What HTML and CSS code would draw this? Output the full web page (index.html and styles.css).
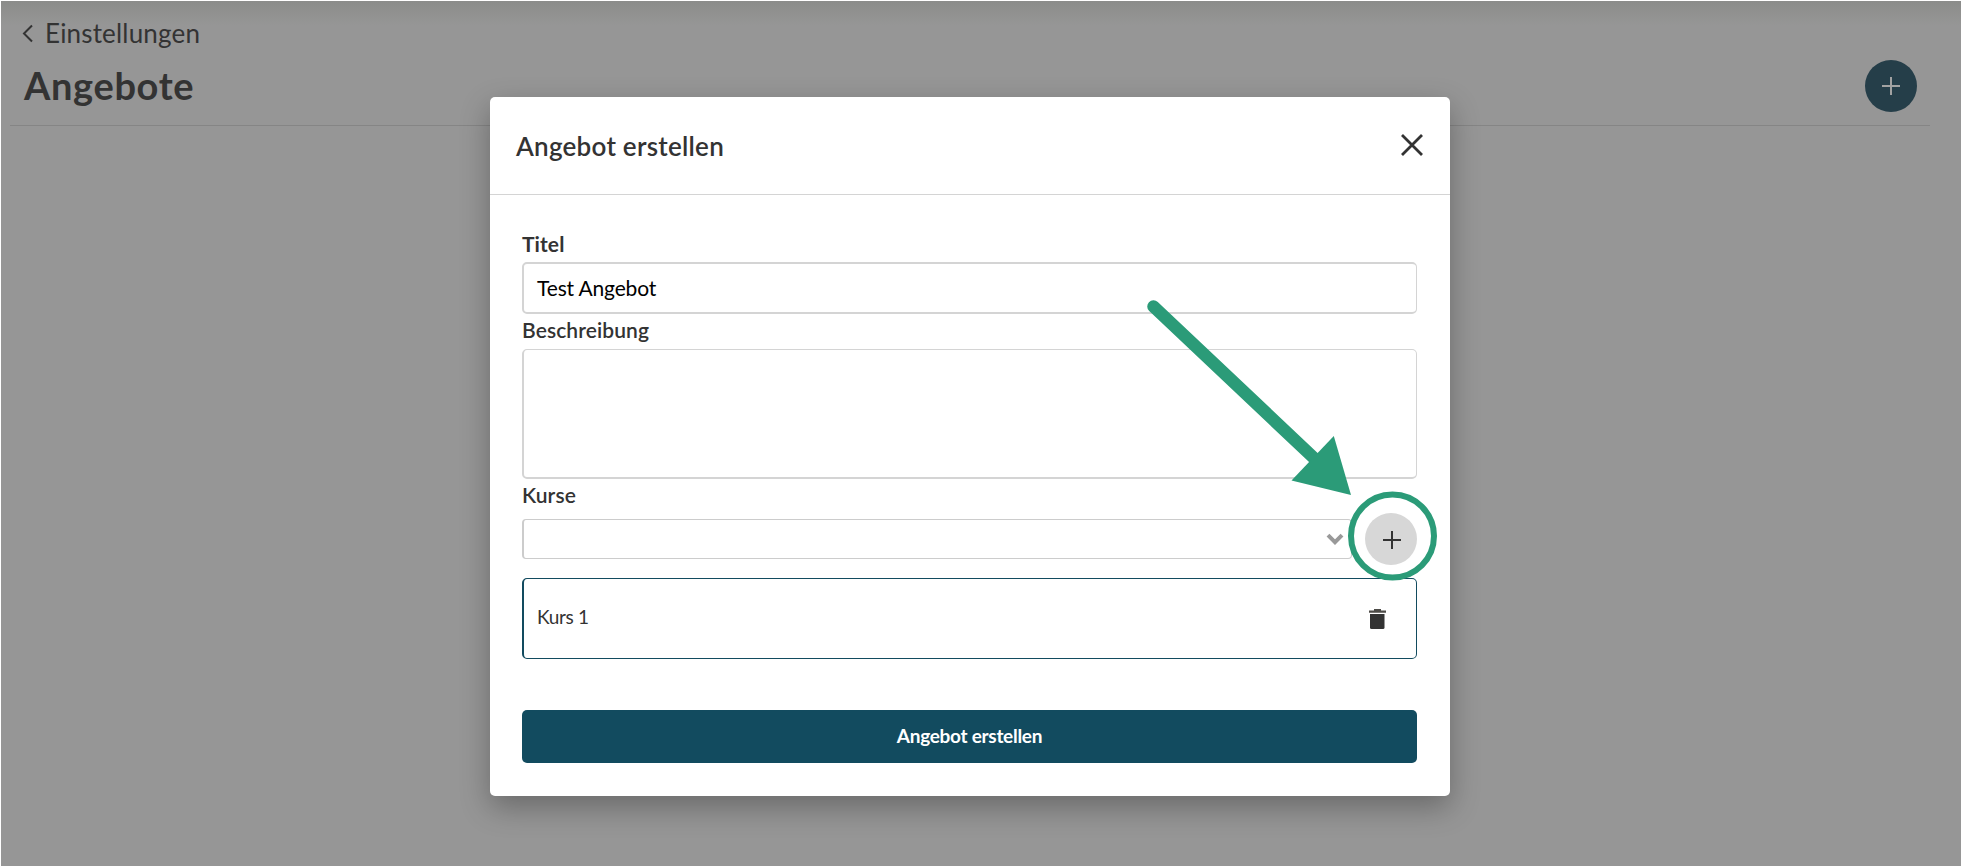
FILE: index.html
```html
<!DOCTYPE html>
<html lang="de">
<head>
<meta charset="utf-8">
<title>Angebote</title>
<link rel="stylesheet" href="styles.css">
</head>
<body>
<main class="page">
  <a class="back"><svg class="back-icon" width="12" height="19" viewBox="0 0 12 19"><path d="M10 1.500 2 9.500l8 8"/></svg><span>Einstellungen</span></a>
  <div class="page-head">
    <h1 class="page-title">Angebote</h1>
    <button class="round round-primary"><svg width="18" height="18" viewBox="0 0 18 18"><path d="M0 9h18M9 0v18"/></svg></button>
  </div>
</main>
<section class="modal">
  <header class="modal-head">
    <h2 class="modal-title">Angebot erstellen</h2>
    <svg class="close" width="22" height="22" viewBox="0 0 22 22"><path d="m1 1 20 20M21 1 1 21"/></svg>
  </header>
  <div class="modal-body">
    <label class="label label-title">Titel</label>
    <div class="input"><span class="input-text">Test Angebot</span></div>
    <label class="label label-desc">Beschreibung</label>
    <div class="textarea"></div>
    <label class="label label-courses">Kurse</label>
    <div class="course-row">
      <div class="select"><svg width="18" height="12" viewBox="0 0 18 12"><path d="m2 2.200 7 7 7-7"/></svg></div>
      <button class="round round-grey"><svg width="18" height="18" viewBox="0 0 18 18"><path d="M0 9h18M9 0v18"/></svg></button>
    </div>
    <div class="course">
      <span class="course-name">Kurs 1</span>
      <svg class="trash" width="17" height="20" viewBox="0 0 17 20"><path class="trash-lid" d="M5 0h7v1.500h5v2.300H0V1.500h5z"/><path d="M1 5h14.500v13.500q0 1.500-1.500 1.500H2.500Q1 20 1 18.500z"/></svg>
    </div>
    <button class="submit">Angebot erstellen</button>
  </div>
</section>
<svg class="hint" width="330" height="290" viewBox="1140 295 330 290">
  <path class="hint-line" d="M1153.500 306.500 1316 460"/>
  <path class="hint-head" d="m1351 495-59.500-14.500 42.300-44.500z"/>
  <circle class="hint-ring" cx="1392.500" cy="536" r="41.500"/>
</svg>
</body>
</html>
```
FILE: styles.css
```css
* { box-sizing: border-box; }
body {
  margin: 0;
  width: 1961px;
  height: 866px;
  padding: 1px 0 0 1px;
  overflow: hidden;
  background: #fff;
  color: #333;
  font-family: Lato, "Liberation Sans", sans-serif;
}
svg { display: block; flex: none; fill: none; }
h1, h2 { margin: 0; }
button { border: 0; padding: 0; font-family: inherit; }
.page {
  height: 865px;
  padding: 16px 31px 0 9px;
  background: linear-gradient(#8b8c8a, #969696 24px);
}
.back {
  display: flex;
  align-items: center;
  height: 32px;
  padding-left: 12px;
  font-size: 26px;
  font-weight: 400;
  letter-spacing: .18px;
}
.back-icon { margin-right: 11px; stroke: #333; stroke-width: 2; }
.page-head {
  display: flex;
  align-items: center;
  justify-content: space-between;
  height: 77px;
  padding: 0 13px 3px 14px;
  border-bottom: 1px solid #858585;
}
.page-title {
  padding-bottom: 1px;
  font-size: 38px;
  font-weight: 700;
  line-height: 48px;
  letter-spacing: .65px;
}
.round {
  display: flex;
  align-items: center;
  justify-content: center;
  flex: none;
  width: 52px;
  height: 52px;
  border-radius: 50%;
}
.round svg { stroke-width: 2; }
.round-primary { background: #253e49; }
.round-primary svg { stroke: #a2a2a2; }
.round-grey { margin-top: 1px; padding: 2px 0 0 1px; background: #d7d7d7; }
.round-grey svg { stroke: #333; }
.modal {
  position: absolute;
  left: 490px;
  top: 97px;
  width: 960px;
  height: 699px;
  border-radius: 5px;
  background: #fff;
  box-shadow: 0 11px 30px rgba(0, 0, 0, .3);
}
.modal-head {
  display: flex;
  align-items: center;
  justify-content: space-between;
  height: 98px;
  padding: 0 27px 0 26px;
  border-bottom: 1px solid #d4d4d4;
}
.modal-title {
  font-size: 26px;
  font-weight: 600;
  line-height: 32px;
  letter-spacing: .25px;
}
.close { margin-bottom: 2px; stroke: #333; stroke-width: 2.800; }
.modal-body {
  display: flex;
  flex-direction: column;
  padding: 35px 33px 0 32px;
}
.label { font-size: 21px; line-height: 28px; font-weight: 600; letter-spacing: .1px; }
.label-title { height: 32px; font-weight: 700; }
.label-desc { height: 35px; padding-top: 2px; }
.label-courses { height: 33px; padding-top: 2px; }
.input {
  display: flex;
  align-items: center;
  height: 52px;
  padding: 0 0 2px 13px;
  border: 2px solid #d4d4d4;
  border-right-width: 1px;
  border-radius: 5px;
  color: #000;
  font-size: 21px;
  letter-spacing: -.15px;
}
.textarea {
  height: 130px;
  border: solid #d4d4d4;
  border-width: 1px 1px 2px 2px;
  border-radius: 5px;
}
.course-row { display: flex; justify-content: space-between; height: 53px; }
.select {
  display: flex;
  align-items: center;
  justify-content: flex-end;
  width: 830px;
  height: 40px;
  margin-top: 7px;
  padding-right: 7px;
  border: 1px solid #ccc;
  border-left-width: 2px;
  border-radius: 4px;
}
.select svg { stroke: #999; stroke-width: 4; }
.course {
  display: flex;
  align-items: center;
  justify-content: space-between;
  height: 81px;
  margin-top: 13px;
  padding: 0 30px 0 13px;
  border: 1px solid #124b5f;
  border-left-width: 2px;
  border-radius: 5px;
}
.course-name { padding-bottom: 4px; font-size: 19px; letter-spacing: -.35px; }
.trash { fill: #333; }
.trash-lid { fill: #4d4b47; }
.submit {
  height: 53px;
  margin-top: 51px;
  padding-bottom: 2px;
  border-radius: 5px;
  background: #124b5f;
  color: #fff;
  font-size: 19px;
  font-weight: 700;
  letter-spacing: -.28px;
}
.hint { position: absolute; left: 1140px; top: 295px; }
.hint-line { stroke: #2b9b78; stroke-width: 12.500; stroke-linecap: round; }
.hint-head { fill: #2b9b78; }
.hint-ring { stroke: #2b9b78; stroke-width: 6; }
```
